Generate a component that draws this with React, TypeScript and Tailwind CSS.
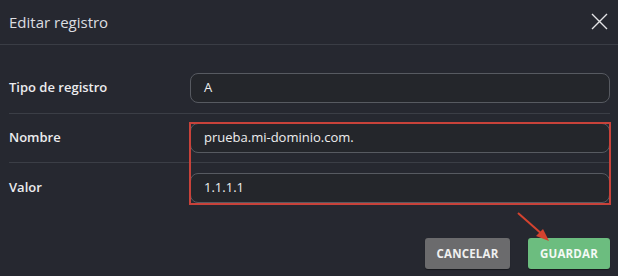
import React from "react";

export default function App() {
  const font = { fontFamily: '"Open Sans", "Liberation Sans", sans-serif' };
  return (
    <div className="w-[618px] h-[276px] bg-[#262830] relative overflow-hidden" style={font}>
      <div className="h-[45px] flex items-center justify-between pl-[9px] pr-[10px] border-b border-[#3a3d45]">
        <span className="text-[15px] text-[#dcdde0] leading-none">Editar registro</span>
        <svg width="17" height="17" viewBox="0 0 17 17" className="mb-[1px]">
          <path d="M1 1 L16 16 M16 1 L1 16" stroke="#e4e4e6" strokeWidth="1.4" fill="none" />
        </svg>
      </div>
      <div className="pt-[28px] pl-[9px] pr-[8px]">
        <Row label="Tipo de registro" value="A" />
        <div className="h-px bg-[#3b3e46] mt-[10px] mb-[9px]" />
        <Row label="Nombre" value="prueba.mi-dominio.com." />
        <div className="h-px bg-[#3b3e46] mt-[9px] mb-[10px]" />
        <Row label="Valor" value="1.1.1.1" />
        <div className="flex justify-end gap-[18px] mt-[35px]">
          <button className="w-[85px] h-[31px] rounded-[3px] bg-[#6b6b6d] text-[#f0f0f0] text-[11.5px] font-bold tracking-[0.2px] shadow-[0_1px_1px_rgba(0,0,0,0.4)]">
            CANCELAR
          </button>
          <button className="w-[82px] h-[31px] rounded-[3px] bg-[#6cbd7f] text-[#f4f9f5] text-[11.5px] font-bold tracking-[0.2px] shadow-[0_1px_1px_rgba(0,0,0,0.4)]">
            GUARDAR
          </button>
        </div>
      </div>
      <div className="absolute left-[189px] top-[122px] w-[422px] h-[83px] border-2 border-[#c8423a] pointer-events-none" />
      <svg className="absolute left-[510px] top-[205px]" width="50" height="45" viewBox="0 0 50 45">
        <line x1="8" y1="8" x2="33" y2="30" stroke="#d4432f" strokeWidth="2" />
        <polygon points="39,36 26,31 33,24" fill="#d4432f" />
      </svg>
    </div>
  );
}

function Row({ label, value }: { label: string; value: string }) {
  return (
    <div className="flex items-center h-[30px]">
      <div className="w-[181px] text-[13px] font-semibold text-[#ececee]">{label}</div>
      <div className="flex-1 h-[30px] rounded-[8px] border border-[#575a61] bg-[#24262b] flex items-center pl-[13px] text-[13px] text-[#eeeeef]">
        {value}
      </div>
    </div>
  );
}
